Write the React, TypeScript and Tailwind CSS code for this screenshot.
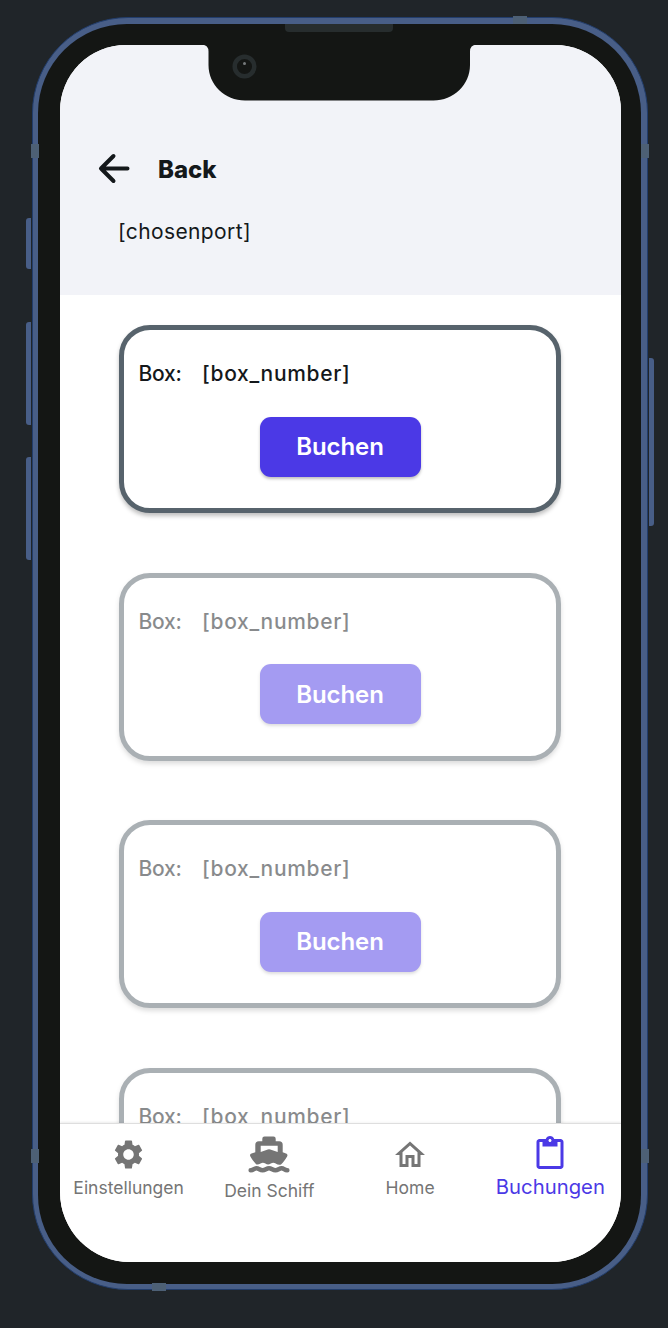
import React from "react";
import { MdSettings, MdOutlineHome, MdContentPaste } from "react-icons/md";

function ShipIcon() {
  return (
    <svg width="42" height="37" viewBox="0 0 42 37" fill="#757575">
      <path
        fillRule="evenodd"
        d="M14.300 5.200V2.700A2.200 2.200 0 0 1 16.500.500h9a2.200 2.200 0 0 1 2.200 2.200v2.500h3.500a3.500 3.500 0 0 1 3.500 3.500v7.600l3.300 1.200c1.400.500 1.900 1.800 1.100 3-1.800 3-3.600 5.800-6.100 8-1.900.600-3.600 0-5.300-1-1.600-1.100-3.300-1-4.900 0-1.900 1.200-3.600 1.200-5.400 0-1.600-1-3.100-1.100-4.900-.100-1.400.800-2.600 1.300-4 1-2.300-2-4.500-5-6.100-7.900-.800-1.200-.300-2.500 1.100-3l3.800-1.200V8.700a3.500 3.500 0 0 1 3.500-3.500zM12.700 9.700v6.200l7.100-2.400a3.500 3.500 0 0 1 2.500 0l7.400 2.400V9.700z"
      />
      <path
        d="M2.700 34.300c2.800 0 3.500-2.100 5.600-2.100 2.600 0 3.500 2.100 6.300 2.100s3.800-2.100 6.400-2.100 3.700 2.100 6.400 2.100 3.700-2.100 6.300-2.100c2.100 0 2.800 2.100 5.600 2.100"
        fill="none"
        stroke="#757575"
        strokeWidth="4.600"
        strokeLinecap="round"
      />
    </svg>
  );
}

function BoxCard({ muted = false }: { muted?: boolean }) {
  return (
    <section
      className={`flex h-[188px] shrink-0 flex-col items-center rounded-[31px] border-[5px] border-[#57636c] bg-white shadow-[0_3px_4px_rgba(0,0,0,0.25)] ${
        muted ? "opacity-50" : ""
      }`}
    >
      <div className="mt-[29px] flex h-[30px] w-full items-center pl-[14.500px] font-['Inter'] text-[21px] font-medium text-[#14181b]">
        <span className="w-[63.500px] tracking-[-0.200px]">Box:</span>
        <span className="tracking-[0.680px]">[box_number]</span>
      </div>
      <button className="mt-[27.500px] h-[60px] w-[161px] rounded-[11px] bg-[#4b39e6] pt-[1px] font-['Inter'] text-[24px] font-semibold tracking-[-0.100px] text-white shadow-[0_2px_3px_rgba(0,0,0,0.25)]">
        Buchen
      </button>
    </section>
  );
}

function Antenna({ place }: { place: string }) {
  return <i className={`absolute bg-[#4d6075] ${place}`} />;
}

function SideKey({ place }: { place: string }) {
  return <i className={`absolute w-[5px] bg-[#485e87] ${place}`} />;
}

export default function App() {
  return (
    <main className="flex h-[1328px] w-[668px] overflow-hidden bg-[#202529] pl-[31.500px] pt-[17px]">
      <div className="relative h-[1273px] w-[616px] shrink-0 rounded-[96px] border border-[#223d6b] bg-[#485e87] p-[5.500px]">
        <SideKey place="left-[-7px] top-[200px] h-[51px] rounded-l-[3px]" />
        <SideKey place="left-[-7px] top-[304px] h-[103px] rounded-l-[3px]" />
        <SideKey place="left-[-7px] top-[439px] h-[103px] rounded-l-[3px]" />
        <SideKey place="right-[-7px] top-[340px] h-[168px] rounded-r-[3px]" />
        <Antenna place="left-[-2px] top-[126px] h-[14px] w-[8px]" />
        <Antenna place="left-[-2px] top-[1131px] h-[14px] w-[8px]" />
        <Antenna place="right-[-2px] top-[126px] h-[14px] w-[8px]" />
        <Antenna place="right-[-2px] top-[1131px] h-[14px] w-[8px]" />
        <Antenna place="left-[480.500px] top-[-2px] h-[8px] w-[14px]" />
        <Antenna place="left-[119px] bottom-[-2px] h-[8px] w-[14px]" />

        <div className="h-full rounded-[89px] bg-[#141614] pt-[21.500px] pr-[20.500px] pb-[22px] pl-[21.500px]">
          <div className="flex h-full flex-col overflow-hidden rounded-t-[66px] rounded-b-[70px] bg-white">
            <header className="h-[249.500px] shrink-0 bg-[#f2f3f8] pt-[105px]">
              <div className="flex h-[37px] items-center pl-[38px]">
                <svg width="32" height="32" viewBox="0 0 32 32" fill="none" stroke="#14181b" strokeWidth="4" strokeLinecap="round" strokeLinejoin="round">
                  <path d="M29.500 15.500H3M15.500 3 3 15.500 15.500 28" />
                </svg>
                <h1 className="ml-[28.500px] pt-[2px] font-['Inter'] text-[24px] font-extrabold leading-none text-[#14181b]">Back</h1>
              </div>
              <p className="mt-[30px] pl-[58.500px] font-['Inter'] text-[21px] leading-[30px] tracking-[0.380px] text-[#14181b]">[chosenport]</p>
            </header>
            <div className="flex min-h-0 flex-1 flex-col gap-[59.500px] overflow-hidden pt-[30.500px] pr-[59.500px] pl-[59.500px]">
              <BoxCard />
              <BoxCard muted />
              <BoxCard muted />
              <BoxCard muted />
            </div>
            <nav className="grid h-[139px] shrink-0 grid-cols-4 border-t border-[#dedede] bg-white font-['Inter'] text-[17.500px] leading-[22px] text-[#757575] shadow-[0_-1px_2px_rgba(0,0,0,0.08)]">
              <a className="flex flex-col items-center pt-[13px] pr-[2px]">
                <MdSettings size={35} />
                <span className="mt-[5px]">Einstellungen</span>
              </a>
              <a className="flex flex-col items-center pt-[12px] pr-[1px]">
                <ShipIcon />
                <span className="mt-[7px]">Dein Schiff</span>
              </a>
              <a className="flex flex-col items-center pt-[13px]">
                <MdOutlineHome size={36} />
                <span className="mt-[4px]">Home</span>
              </a>
              <a className="flex flex-col items-center pt-[12px] text-[20.300px] text-[#4b39e6]">
                <MdContentPaste size={36} />
                <span className="mt-[4px]">Buchungen</span>
              </a>
            </nav>
          </div>
        </div>

        <svg className="absolute left-[169.500px] top-[5px]" width="276" height="80" viewBox="0 0 276 80">
          <path d="M0 21.500Q6.500 22 6.500 28.500V42C6.500 62 23 77.500 43 77.500H231.500C251.500 77.500 268 62 268 42V28.500Q268 22 274.500 21.500V20H0Z" fill="#141614" />
          <path d="M83 1h108v4a4 4 0 0 1-4 4H87a4 4 0 0 1-4-4z" fill="#272d2e" />
          <circle cx="42.500" cy="43.500" r="9.800" fill="#141614" stroke="#272d2e" strokeWidth="4.500" />
          <circle cx="42.500" cy="40.500" r="1.500" fill="#777b7c" />
        </svg>
      </div>
    </main>
  );
}
